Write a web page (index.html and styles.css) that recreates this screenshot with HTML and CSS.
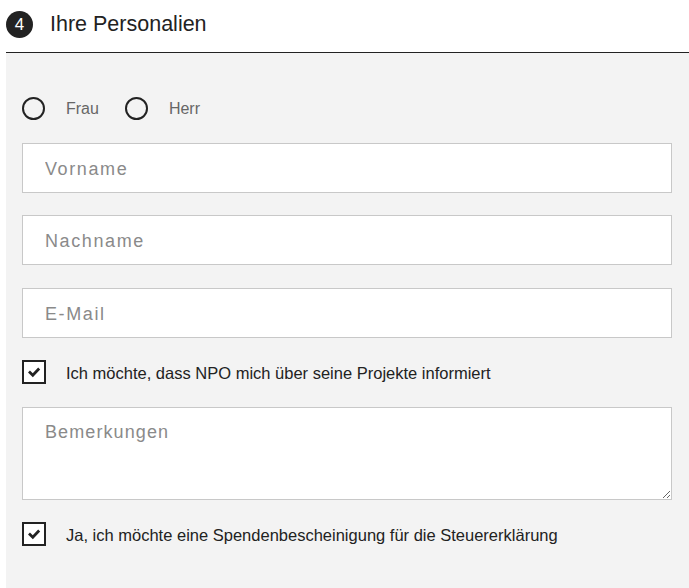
FILE: index.html
```html
<!DOCTYPE html>
<html lang="de">
<head>
<meta charset="utf-8">
<title>Ihre Personalien</title>
<link rel="stylesheet" href="styles.css">
</head>
<body>
<section class="section">
  <header class="header">
    <span class="step">4</span>
    <h2 class="title">Ihre Personalien</h2>
  </header>
  <div class="panel">
    <div class="radio-row">
      <label class="radio"><span class="radio-circle"></span><span class="radio-text">Frau</span></label>
      <label class="radio"><span class="radio-circle"></span><span class="radio-text">Herr</span></label>
    </div>
    <input class="text-input" type="text" placeholder="Vorname">
    <input class="text-input" type="text" placeholder="Nachname">
    <input class="text-input" type="text" placeholder="E-Mail">
    <label class="check">
      <span class="check-box"><svg viewBox="0 0 20 20" width="20" height="20"><path d="M6 10.5 L8.8 13.2 L14.2 7.6" fill="none" stroke="#222" stroke-width="2.8" stroke-linecap="square"/></svg></span>
      <span class="check-text">Ich möchte, dass NPO mich über seine Projekte informiert</span>
    </label>
    <textarea class="text-area" placeholder="Bemerkungen"></textarea>
    <label class="check">
      <span class="check-box"><svg viewBox="0 0 20 20" width="20" height="20"><path d="M6 10.5 L8.8 13.2 L14.2 7.6" fill="none" stroke="#222" stroke-width="2.8" stroke-linecap="square"/></svg></span>
      <span class="check-text">Ja, ich möchte eine Spendenbescheinigung für die Steuererklärung</span>
    </label>
  </div>
</section>
</body>
</html>
```
FILE: styles.css
```css
* { box-sizing: border-box; }
html, body { margin: 0; padding: 0; background: #fff; }
body {
  font-family: "Liberation Sans", Arial, Helvetica, sans-serif;
  color: #222;
}
.section {
  margin-left: 6px;
}
.header {
  height: 53px;
  display: flex;
  align-items: center;
  padding-bottom: 3px;
  border-bottom: 1px solid #222;
}
.step {
  width: 27px;
  height: 27px;
  border-radius: 50%;
  background: #222;
  color: #fff;
  font-size: 17px;
  display: flex;
  align-items: center;
  justify-content: center;
}
.title {
  margin: 0 0 0 17px;
  font-size: 21.5px;
  font-weight: normal;
  color: #222;
}
.panel {
  background: #f3f3f3;
  padding: 44px 17px 43px 16px;
  display: flex;
  flex-direction: column;
  gap: 22.5px;
  min-height: 535px;
}
.radio-row {
  display: flex;
  align-items: center;
  gap: 26px;
  height: 23px;
}
.radio {
  display: flex;
  align-items: center;
  gap: 21px;
}
.radio-circle {
  width: 23px;
  height: 23px;
  border: 2px solid #222;
  border-radius: 50%;
}
.radio-text {
  font-size: 16px;
  color: #666;
  padding-top: 1px;
}
.text-input {
  display: block;
  width: 100%;
  height: 50px;
  border: 1px solid #c8c8c8;
  background: #fff;
  padding: 3px 22px 0;
  font-family: inherit;
  font-size: 18px;
  letter-spacing: 1.6px;
  color: #222;
  outline: none;
}
.text-input::placeholder,
.text-area::placeholder {
  color: #8a8a8a;
}
.text-area {
  display: block;
  width: 100%;
  height: 93px;
  border: 1px solid #c8c8c8;
  background: #fff;
  padding: 14px 22px;
  font-family: inherit;
  font-size: 18px;
  letter-spacing: 1.1px;
  color: #222;
  resize: vertical;
  outline: none;
}
.check {
  display: flex;
  align-items: center;
  gap: 20px;
  height: 24px;
}
.check-box {
  width: 24px;
  height: 24px;
  border: 2px solid #222;
  background: #fff;
  display: flex;
  align-items: center;
  justify-content: center;
}
.check-text {
  font-size: 16.5px;
  color: #222;
  padding-top: 2px;
}
```
